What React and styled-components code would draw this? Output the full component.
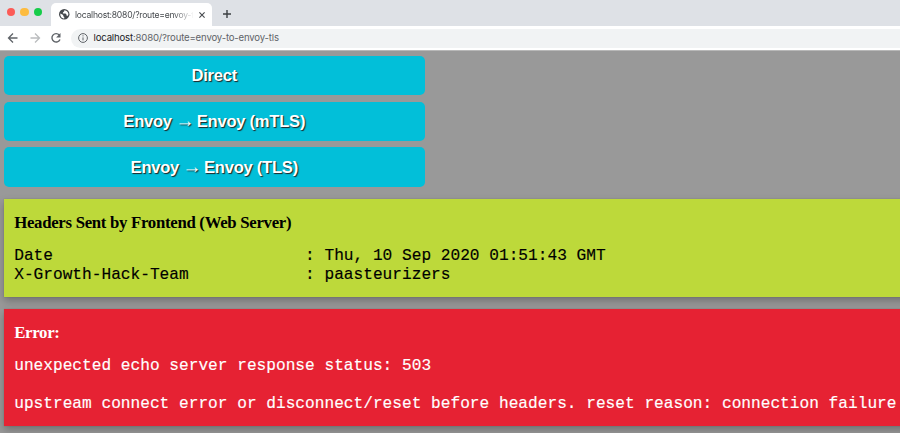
import React from "react";
import styled, { createGlobalStyle } from "styled-components";

const GlobalStyle = createGlobalStyle`
  * { box-sizing: border-box; }
  html, body { margin: 0; background: #999; overflow: hidden; }
`;

const Window = styled.div`
  width: 900px;
  height: 433px;
  overflow: hidden;
  background: #999;
`;

const TabStrip = styled.header`
  display: flex;
  height: 26px;
  padding-top: 3px;
  background: #dee1e6;
`;

const Lights = styled.div`
  display: flex;
  gap: 5.4px;
  padding: 4.7px 0 0 6.9px;
  width: 51px;
`;

const Light = styled.span`
  width: 8.2px;
  height: 8.2px;
  border-radius: 50%;
  background: ${(p) => p.$color};
`;

const Tab = styled.div`
  display: flex;
  align-items: center;
  width: 161px;
  height: 23px;
  padding-left: 8px;
  border-radius: 5px 5px 0 0;
  background: #fff;
`;

const TabTitle = styled.span`
  width: 118px;
  margin-left: 5.5px;
  overflow: hidden;
  white-space: nowrap;
  font: 8.6px/12px Inter, sans-serif;
  letter-spacing: -0.24px;
  color: #45494d;
  mask-image: linear-gradient(to right, #000 98px, transparent 119px);
`;

const Icon = styled.svg`
  display: block;
  flex: none;
  width: ${(p) => p.$size}px;
  height: ${(p) => p.$size}px;
  margin-left: ${(p) => p.$left || 0}px;
  margin-top: ${(p) => p.$top || 0}px;
  fill: none;
  stroke: ${(p) => p.$color || "#5f6368"};
  stroke-width: ${(p) => p.$stroke || 2};
`;

const Toolbar = styled.nav`
  display: flex;
  align-items: center;
  height: 24px;
  padding-left: 7px;
  background: #fff;
`;

const AddressBar = styled.div`
  display: flex;
  align-items: center;
  flex: 1;
  height: 19px;
  margin-left: 9px;
  padding-left: 7px;
  border-radius: 10px 0 0 10px;
  background: #f1f3f4;
`;

const Address = styled.span`
  margin-left: 5.5px;
  white-space: nowrap;
  font: 9.6px/14px Inter, sans-serif;
  letter-spacing: -0.175px;
  color: #5f6368;
`;

const Host = styled.span`
  color: #202124;
`;

const Page = styled.main`
  height: 383px;
  padding: 5px 0 0 3.5px;
  border-top: 1px solid #b8b8b8;
  background: #999;
`;

const RouteList = styled.div`
  display: flex;
  flex-direction: column;
  gap: 6.4px;
  width: 421.5px;
`;

const RouteButton = styled.button`
  height: 39.3px;
  padding: 0;
  border: 0;
  border-radius: 5px;
  background: #02bfd9;
  color: #fff;
  font: bold 16.6px/39px "Liberation Sans", Arial, sans-serif;
  letter-spacing: -0.26px;
  text-shadow: 1px 1px 1px #222;
`;

const Arrow = styled.span`
  display: inline-block;
  width: 16.2px;
  line-height: 20px;
  font-family: "Liberation Serif", serif;
  font-weight: normal;
  transform: translate(0.4px, -1px) scale(1.15, 1.1);
`;

const Panel = styled.section`
  width: 1000px;
  height: ${(p) => p.$height}px;
  margin-top: 12px;
  padding: 14px 0 0 10.7px;
  background: ${(p) => p.$background};
  color: ${(p) => p.$color};
  box-shadow: 0 4px 8px rgba(0, 0, 0, 0.25), 0 0 1px rgba(0, 0, 0, 0.2);
`;

const PanelTitle = styled.h3`
  margin: 0 0 14.6px;
  font: bold 16.8px/20px "Liberation Serif", "Times New Roman", serif;
  letter-spacing: -0.3px;
`;

const Output = styled.pre`
  margin: 0;
  font: 16.16px/19px "Liberation Mono", "Courier New", monospace;
  -webkit-text-stroke: 0.15px currentColor;
`;

const headers = [
  ["Date", "Thu, 10 Sep 2020 01:51:43 GMT"],
  ["X-Growth-Hack-Team", "paasteurizers"],
];

export default function App() {
  return (
    <Window>
      <GlobalStyle />
      <TabStrip>
        <Lights>
          <Light $color="#fc5b57" />
          <Light $color="#fdbc40" />
          <Light $color="#16cc49" />
        </Lights>
        <Tab>
          <Icon viewBox="0 0 20 20" $size={10.5}>
            <circle cx="10" cy="10" r="10" fill="#45494d" stroke="none" />
            <path d="M2.5 8.5 8 11.5V14l2 1v3C5 18 2 14 2.5 8.5ZM10 2.2v2L7.5 6.5v2h5l2 2.5v2h2.2l.6-1C19.5 7 15 2.5 10 2.2Z" fill="#fff" stroke="none" />
          </Icon>
          <TabTitle>localhost:8080/?route=envoy-t</TabTitle>
          <Icon viewBox="0 0 8 8" $size={8} $left={4.5} $color="#45494d" $stroke={1.1}>
            <path d="m1.4 1.4 5.2 5.2m0-5.2-5.2 5.2" />
          </Icon>
        </Tab>
        <Icon viewBox="0 0 10 10" $size={10} $left={10} $top={6} $color="#3c4043" $stroke={1.4}>
          <path d="M5 1v8M1 5h8" />
        </Icon>
      </TabStrip>
      <Toolbar>
        <Icon viewBox="0 0 12 12" $size={12} $stroke={1.3}>
          <path d="M10.5 6h-9M6 1.5 1.5 6 6 10.5" />
        </Icon>
        <Icon viewBox="0 0 12 12" $size={12} $left={9.5} $color="#babcbe" $stroke={1.3}>
          <path d="M1.5 6h9M6 1.5 10.5 6 6 10.5" />
        </Icon>
        <Icon viewBox="0 0 12 12" $size={12} $left={9.5} $stroke={1.4}>
          <path d="M9.3 3A4.2 4.2 0 1 0 10 7.5" />
          <path d="M10.5 1v4.4H6.1Z" fill="#5f6368" stroke="none" />
        </Icon>
        <AddressBar>
          <Icon viewBox="0 0 10 10" $size={10} $stroke={1}>
            <circle cx="5" cy="5" r="4.4" />
            <path d="M5 4.4v3M5 2.3v1.1" />
          </Icon>
          <Address><Host>localhost</Host>:8080/?route=envoy-to-envoy-tls</Address>
        </AddressBar>
      </Toolbar>
      <Page>
        <RouteList>
          <RouteButton>Direct</RouteButton>
          <RouteButton>Envoy <Arrow>→</Arrow> Envoy (mTLS)</RouteButton>
          <RouteButton>Envoy <Arrow>→</Arrow> Envoy (TLS)</RouteButton>
        </RouteList>
        <Panel $height={98} $background="#bdd93a" $color="#000">
          <PanelTitle>Headers Sent by Frontend (Web Server)</PanelTitle>
          <Output>{headers.map(([name, value]) => `${name.padEnd(30)}: ${value}`).join("\n")}</Output>
        </Panel>
        <Panel $height={117} $background="#e62233" $color="#fff">
          <PanelTitle>Error:</PanelTitle>
          <Output>{"unexpected echo server response status: 503\n\nupstream connect error or disconnect/reset before headers. reset reason: connection failure"}</Output>
        </Panel>
      </Page>
    </Window>
  );
}
